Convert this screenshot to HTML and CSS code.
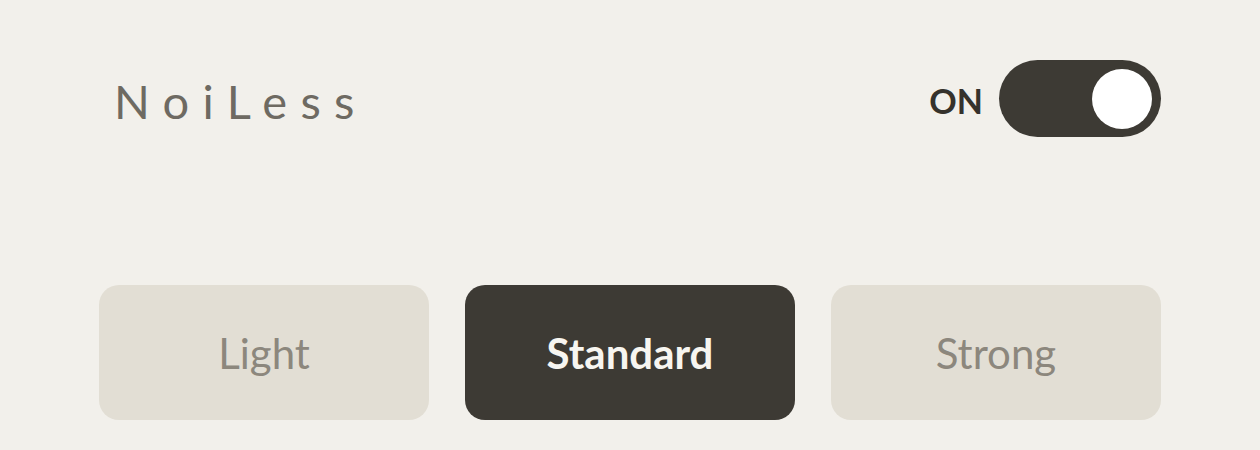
FILE: index.html
```html
<!DOCTYPE html>
<html lang="en">
<head>
<meta charset="utf-8">
<title>NoiLess</title>
<link rel="stylesheet" href="styles.css">
</head>
<body>
<main class="app">
  <header class="header">
    <h1 class="brand">NoiLess</h1>
    <div class="power">
      <span class="power-label">ON</span>
      <button class="switch is-on" type="button" aria-label="Toggle noise reduction"><span class="knob"></span></button>
    </div>
  </header>
  <section class="modes">
    <button class="mode" type="button">Light</button>
    <button class="mode is-active" type="button">Standard</button>
    <button class="mode" type="button">Strong</button>
  </section>
</main>
</body>
</html>
```

FILE: styles.css
```css
html, body {
  margin: 0;
  padding: 0;
}
body {
  background: #f2f0eb;
  font-family: "Lato", "Noto Sans", "Liberation Sans", sans-serif;
  width: 1260px;
  height: 450px;
  overflow: hidden;
}
.app {
  box-sizing: border-box;
  width: 1062px;
  margin: 0 auto;
  padding-top: 60px;
}
.header {
  display: flex;
  align-items: center;
  justify-content: space-between;
  height: 77px;
}
.brand {
  margin: 0 0 0 15px;
  font-weight: 400;
  font-size: 47px;
  letter-spacing: 13.3px;
  color: #6e6a62;
  line-height: 1;
  padding-top: 6px;
}
.power {
  display: flex;
  align-items: center;
  gap: 16px;
}
.power-label {
  font-weight: 700;
  font-size: 34px;
  color: #35322c;
  padding-top: 3px;
}
.switch {
  box-sizing: border-box;
  width: 162px;
  height: 77px;
  border: 0;
  border-radius: 39px;
  background: #3d3a34;
  display: flex;
  align-items: center;
  justify-content: flex-end;
  padding: 0 9px;
  cursor: pointer;
}
.knob {
  width: 60px;
  height: 60px;
  border-radius: 50%;
  background: #ffffff;
}
.modes {
  display: grid;
  grid-template-columns: repeat(3, 1fr);
  gap: 36px;
  margin-top: 148px;
}
.mode {
  height: 135px;
  border: 0;
  border-radius: 20px;
  background: #e2ded4;
  color: #8c877d;
  font-family: inherit;
  font-size: 42px;
  font-weight: 400;
  cursor: pointer;
  padding: 0;
}
.mode.is-active {
  background: #3d3a34;
  color: #f7f5f0;
  font-weight: 700;
}
```
